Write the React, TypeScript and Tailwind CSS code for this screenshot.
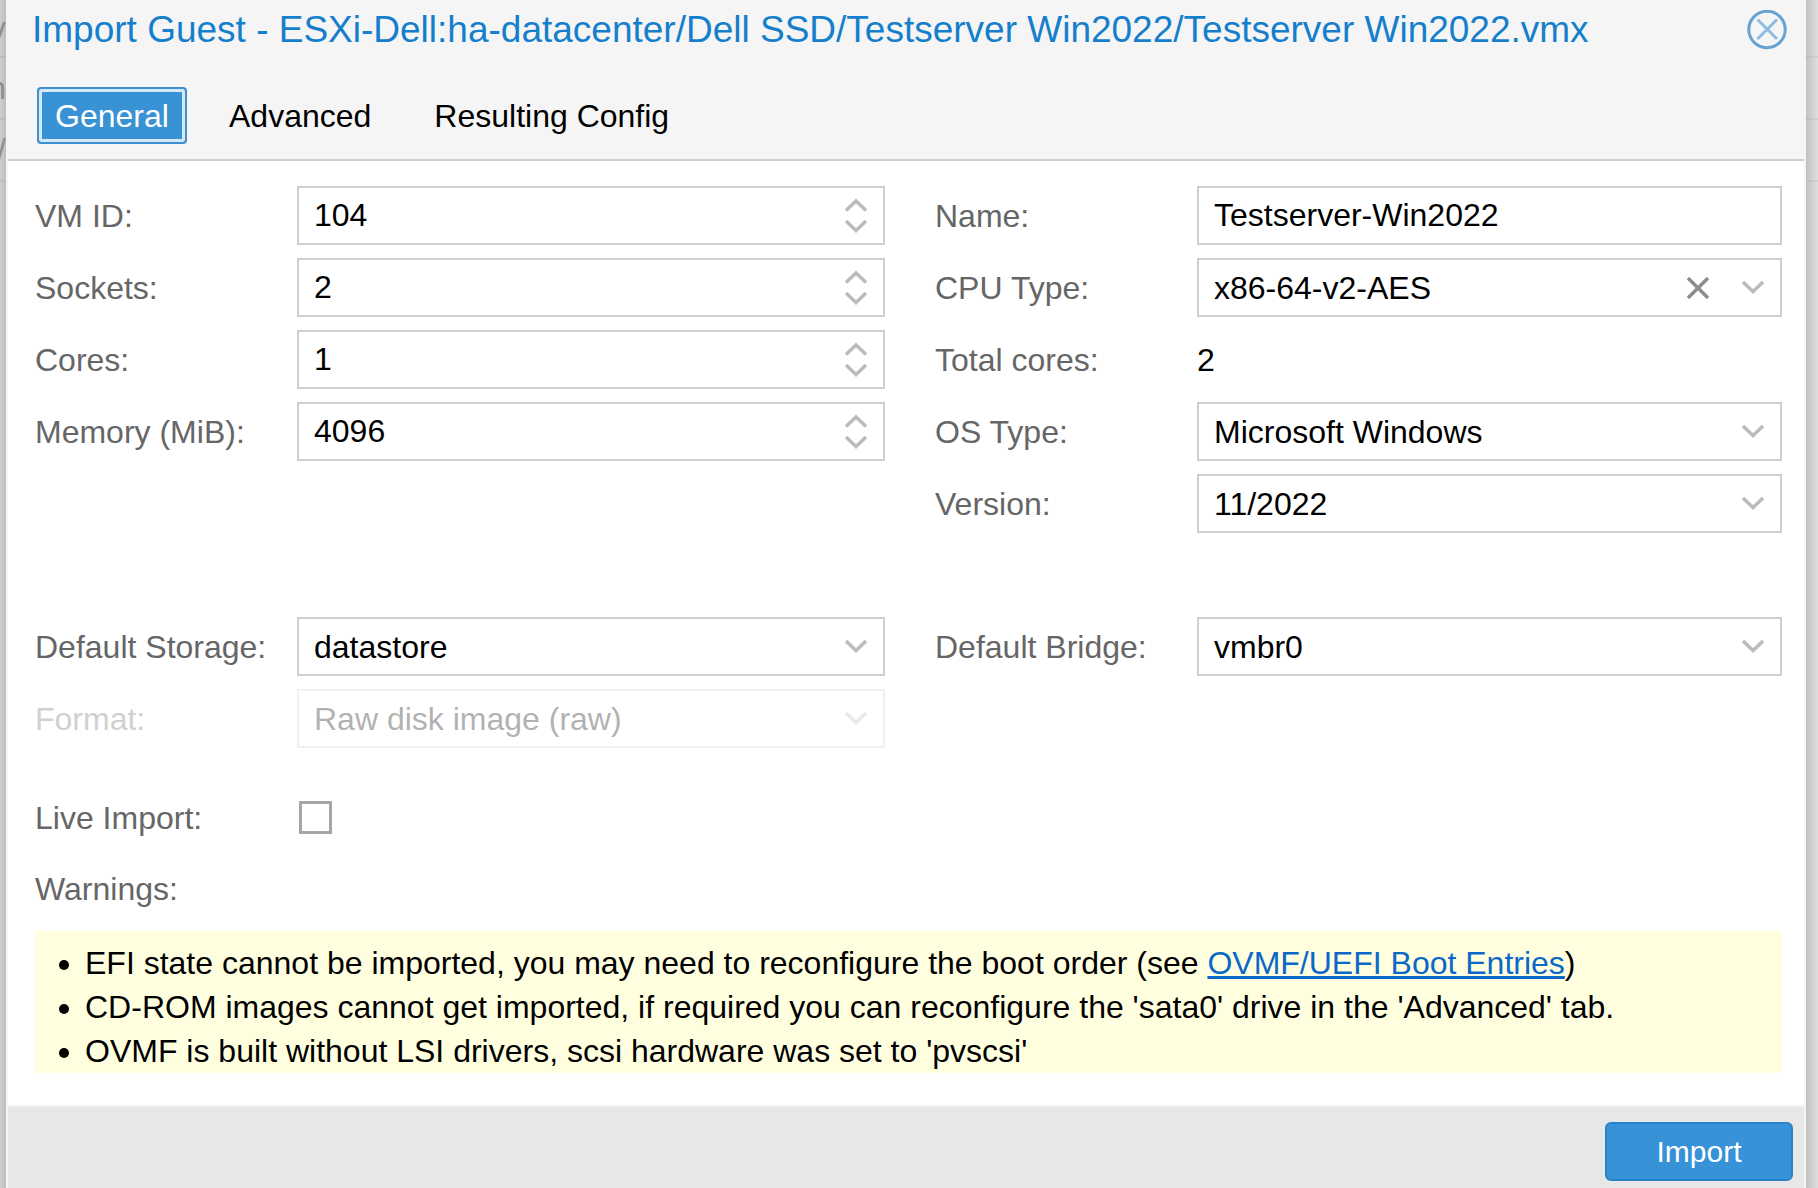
import React, { useState } from 'react';

function Chevron({ up = false }: { up?: boolean }) {
  return (
    <svg width="22" height="14" viewBox="0 0 22 14" fill="none" stroke="#bcbcbc" strokeWidth="3.6" aria-hidden="true">
      <path d={up ? 'M1 12.5 11 3 21 12.5' : 'M1 1 11 10.5 21 1'} />
    </svg>
  );
}

function Row({ id, label, disabled = false, children }: { id: string; label: string; disabled?: boolean; children: React.ReactNode }) {
  return (
    <div className={disabled ? 'flex h-[59px] items-center opacity-30' : 'flex h-[59px] items-center'}>
      <label htmlFor={id} className="w-[262px] shrink-0 whitespace-nowrap text-[#666666]">{label}</label>
      {children}
    </div>
  );
}

const box = 'h-[59px] w-full appearance-none rounded-none border-2 border-[#cfcfcf] bg-white px-[15px] text-black outline-none';

function SpinnerField({ id, label, initial }: { id: string; label: string; initial: number }) {
  const [value, setValue] = useState(initial);
  return (
    <Row id={id} label={label}>
      <div className="relative min-w-0 flex-1">
        <input id={id} className={box} value={value} onChange={(e) => setValue(Number(e.target.value) || 0)} />
        <div className="absolute inset-y-0 right-0 flex w-[58px] flex-col items-center justify-center gap-2">
          <button type="button" aria-label={`Increase ${label}`} onClick={() => setValue(value + 1)}><Chevron up /></button>
          <button type="button" aria-label={`Decrease ${label}`} onClick={() => setValue(value - 1)}><Chevron /></button>
        </div>
      </div>
    </Row>
  );
}

function SelectField({ id, label, value, clearable = false, disabled = false }: { id: string; label: string; value: string; clearable?: boolean; disabled?: boolean }) {
  return (
    <Row id={id} label={label} disabled={disabled}>
      <div className="relative min-w-0 flex-1">
        <select id={id} className={box} disabled={disabled} defaultValue={value}>
          <option>{value}</option>
        </select>
        <div className="pointer-events-none absolute inset-y-0 right-0 flex w-[58px] items-center justify-center">
          <Chevron />
        </div>
        {clearable && (
          <button type="button" aria-label={`Clear ${label}`} className="absolute inset-y-0 right-[58px] flex w-[52px] items-center justify-center">
            <svg width="22" height="22" viewBox="0 0 22 22" fill="none" stroke="#8c8c8c" strokeWidth="3.4" aria-hidden="true">
              <path d="M1 1 21 21M21 1 1 21" />
            </svg>
          </button>
        )}
      </div>
    </Row>
  );
}

/* Slivers of the dimmed grid that show on either side of the window. */
function Backdrop({ side, cells }: { side: 'left' | 'right'; cells: string[] }) {
  return (
    <div
      aria-hidden="true"
      className={
        side === 'left'
          ? 'w-[6px] shrink-0 overflow-hidden bg-linear-to-r from-[#cdcdcd] to-[#bebebe] text-[#8f8f8f]'
          : 'w-3 shrink-0 overflow-hidden bg-linear-to-r from-[#c2c2c2] to-[#dedede]'
      }
    >
      {cells.map((cell, i) => (
        <div key={i} className="flex h-[62px] items-center justify-end border-b-2 border-black/5 first:h-[58px]">{cell}</div>
      ))}
    </div>
  );
}

export default function App() {
  return (
    <div className="flex min-h-screen overflow-hidden font-['Liberation_Sans',Arial,sans-serif] text-[32px] leading-[44px] text-black">
      <Backdrop side="left" cells={['v', 'n', '/']} />
      <main className="flex min-w-0 flex-1 flex-col border-x-2 border-[#f5f5f5] bg-white">
        <header className="border-b-2 border-[#cfcfcf] bg-[#f5f5f5]">
          <div className="flex items-center justify-between pl-6 pr-[17px] pt-2">
            <h1 className="whitespace-nowrap text-[37px] text-[#157fcc]">Import Guest - ESXi-Dell:ha-datacenter/Dell SSD/Testserver Win2022/Testserver Win2022.vmx</h1>
            <button type="button" aria-label="Close">
              <svg width="40" height="40" viewBox="0 0 40 40" fill="none" stroke="#67a3d2" aria-hidden="true">
                <circle cx="20" cy="19.5" r="18.2" strokeWidth="3" />
                <path d="M10.5 9.5 30 29M30 9.5 10.5 29" stroke="#8dbbe3" strokeWidth="3" />
              </svg>
            </button>
          </div>
          <nav role="tablist" className="flex pb-[15px] pl-[29px] pt-[35px]">
            <button type="button" role="tab" aria-selected="true" className="h-[57px] w-[150px] rounded border-2 border-[#4090d0] bg-[#3892d4] text-white ring-[3px] ring-inset ring-[#d3e9f9]">General</button>
            <button type="button" role="tab" aria-selected="false" className="ml-[42px]">Advanced</button>
            <button type="button" role="tab" aria-selected="false" className="ml-[63px]">Resulting Config</button>
          </nav>
        </header>

        <form className="flex-1 pl-[27px] pr-[22px] pt-[25px]" onSubmit={(e) => e.preventDefault()}>
          <div className="grid grid-cols-[850fr_847fr] gap-x-[50px]">
            <div className="flex flex-col gap-[13px]">
              <SpinnerField id="vmid" label="VM ID:" initial={104} />
              <SpinnerField id="sockets" label="Sockets:" initial={2} />
              <SpinnerField id="cores" label="Cores:" initial={1} />
              <SpinnerField id="memory" label="Memory (MiB):" initial={4096} />
            </div>
            <div className="flex flex-col gap-[13px]">
              <Row id="name" label="Name:">
                <input id="name" className={box} defaultValue="Testserver-Win2022" />
              </Row>
              <SelectField id="cpu" label="CPU Type:" value="x86-64-v2-AES" clearable />
              <Row id="total" label="Total cores:"><output id="total">2</output></Row>
              <SelectField id="os" label="OS Type:" value="Microsoft Windows" />
              <SelectField id="version" label="Version:" value="11/2022" />
            </div>
          </div>

          <div className="mt-[84px] grid grid-cols-[850fr_847fr] gap-x-[50px]">
            <div className="flex flex-col gap-[13px]">
              <SelectField id="storage" label="Default Storage:" value="datastore" />
              <SelectField id="format" label="Format:" value="Raw disk image (raw)" disabled />
            </div>
            <SelectField id="bridge" label="Default Bridge:" value="vmbr0" />
          </div>

          <div className="mt-10">
            <Row id="live" label="Live Import:">
              <input id="live" type="checkbox" className="ml-[2px] size-[33px] appearance-none border-[3px] border-[#a6a6a6] bg-white" />
            </Row>
          </div>
          <p className="mt-5 text-[#666666]">Warnings:</p>
          <ul className="mt-5 list-disc bg-[#ffffe0] pl-[50px] pt-[10px]">
            <li>EFI state cannot be imported, you may need to reconfigure the boot order (see <a href="#boot" className="text-[#0b68c8] underline">OVMF/UEFI Boot Entries</a>)</li>
            <li>CD-ROM images cannot get imported, if required you can reconfigure the 'sata0' drive in the 'Advanced' tab.</li>
            <li>OVMF is built without LSI drivers, scsi hardware was set to 'pvscsi'</li>
          </ul>
        </form>

        <footer className="mt-8 flex justify-end border-t-2 border-[#f2f2f2] bg-[#e7e7e7] pb-[7px] pr-[11px] pt-[15px]">
          <button type="button" className="h-[59px] w-[188px] rounded-md border-2 border-[#2882c6] bg-[#3892d8] text-[30px] text-white">Import</button>
        </footer>
      </main>
      <Backdrop side="right" cells={['', '', '']} />
    </div>
  );
}
